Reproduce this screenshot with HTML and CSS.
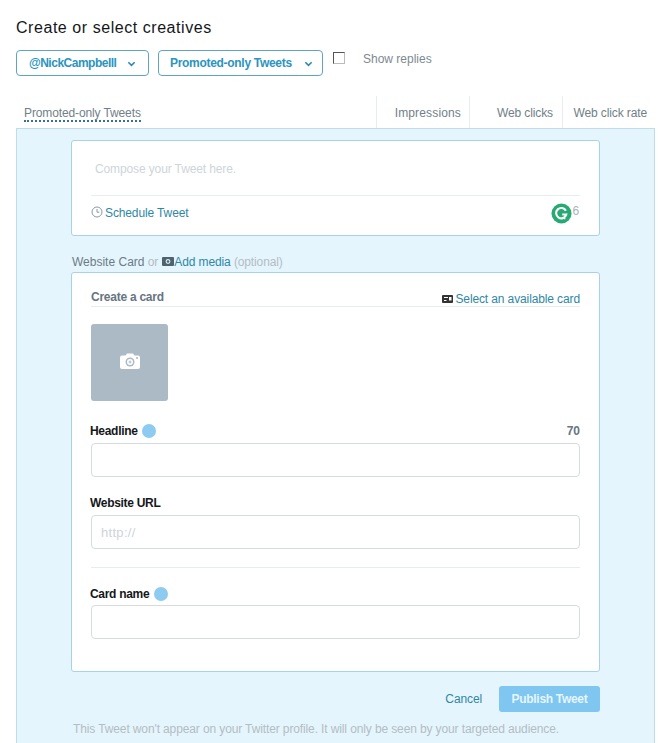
FILE: index.html
```html
<!DOCTYPE html>
<html lang="en">
<head>
<meta charset="utf-8">
<title>Create or select creatives</title>
<link rel="stylesheet" href="styles.css">
</head>
<body>
<div class="page">
  <h1 class="title">Create or select creatives</h1>
  <div class="filters">
    <button class="select select-account">@NickCampbelll<svg class="chev" viewBox="0 0 10 6"><path d="M1.500 1 5 4.500 8.500 1" fill="none" stroke="#2b8ab5" stroke-width="1.800"/></svg></button>
    <button class="select select-type">Promoted-only Tweets<svg class="chev" viewBox="0 0 10 6"><path d="M1.500 1 5 4.500 8.500 1" fill="none" stroke="#2b8ab5" stroke-width="1.800"/></svg></button>
    <span class="checkbox"></span>
    <span class="show-replies">Show replies</span>
  </div>
  <div class="table-head">
    <div class="col col-main"><span class="dotted">Promoted-only Tweets</span></div>
    <div class="col col-imp">Impressions</div>
    <div class="col col-clicks">Web clicks</div>
    <div class="col col-rate">Web click rate</div>
  </div>
  <div class="panel">
    <div class="column">
      <div class="box composer">
        <div class="placeholder compose-text">Compose your Tweet here.</div>
        <div class="composer-foot">
          <svg class="clock" viewBox="0 0 12 12"><circle cx="6" cy="6" r="5" fill="none" stroke="#8a9aa3" stroke-width="1"/><path d="M6 3v3.200h2.400" fill="none" stroke="#8a9aa3"/></svg>
          <a class="link">Schedule Tweet</a>
          <span class="grammarly"><svg viewBox="0 0 22 22"><circle cx="11" cy="11" r="10.500" fill="#26a972"/><path d="M15.600 8.200A5.400 5.400 0 1 0 16 12h-4.200" fill="none" stroke="#fff" stroke-width="2.200"/><path d="M12 15l3 1.500" stroke="#fff" stroke-width="1.600"/></svg></span>
          <span class="count">6</span>
        </div>
      </div>
      <div class="card-label">
        <span class="label-dark">Website Card</span> <span class="muted">or</span>
        <svg class="cam-small" viewBox="0 0 12 9"><rect width="12" height="9" rx="1" fill="#4b6470"/><circle cx="6" cy="4.500" r="2.400" fill="#dfe8ec"/><circle cx="6" cy="4.500" r="1.200" fill="#4b6470"/></svg><a class="link">Add media</a>
        <span class="muted">(optional)</span>
      </div>
      <div class="box card">
        <div class="card-head">
          <span class="card-title">Create a card</span>
          <span class="card-select">
            <svg class="card-icon" viewBox="0 0 11 8"><rect width="11" height="8" rx="1" fill="#333"/><path d="M2 2.500h4M2 5.500h2.500" stroke="#fff"/><rect x="7" y="2" width="2.500" height="3.500" fill="#fff"/></svg><a class="link">Select an available card</a>
          </span>
        </div>
        <div class="thumb">
          <svg class="cam" viewBox="0 0 20 16"><path d="M2 2.500h3.500L7 .5h6l1.500 2H18a2 2 0 0 1 2 2V14a2 2 0 0 1-2 2H2a2 2 0 0 1-2-2V4.500a2 2 0 0 1 2-2z" fill="#fff"/><circle cx="10" cy="9" r="4.500" fill="#abbac4"/><circle cx="10" cy="9" r="3" fill="#fff"/><path d="M10 7.500v3M8.500 9h3" stroke="#abbac4"/><circle cx="17" cy="5" r="1" fill="#abbac4"/></svg>
        </div>
        <div class="field-head field-headline">
          <span class="field-label">Headline</span><span class="help help-headline"></span>
          <span class="limit">70</span>
        </div>
        <div class="input"></div>
        <div class="field-head field-url">
          <span class="field-label">Website URL</span>
        </div>
        <div class="input placeholder url-text">http://</div>
        <hr class="rule">
        <div class="field-head field-name">
          <span class="field-label">Card name</span><span class="help"></span>
        </div>
        <div class="input input-last"></div>
      </div>
      <div class="actions">
        <a class="cancel">Cancel</a>
        <button class="publish">Publish Tweet</button>
      </div>
      <p class="note">This Tweet won't appear on your Twitter profile. It will only be seen by your targeted audience.</p>
    </div>
  </div>
</div>
</body>
</html>
```
FILE: styles.css
```css
* { box-sizing: border-box; }
html, body { margin: 0; height: 743px; overflow: hidden; background: #fff; }
body { font-family: "Liberation Sans", Arial, sans-serif; color: #707f88; font-size: 12px; letter-spacing: -0.12px; }
.page { padding: 18px 15px 0 16px; }
.title { margin: 0; font-size: 16px; line-height: 20px; font-weight: 400; color: #14171a; letter-spacing: 0.55px; }
.filters { display: flex; align-items: flex-start; margin-top: 12px; height: 26px; }
.select { height: 26px; padding: 0 0 1px 12px; display: flex; align-items: center; background: #fff; border: 1px solid #5fa4c1; border-radius: 4px; color: #2b94c0; font: 700 12px "Liberation Sans", Arial, sans-serif; letter-spacing: -0.3px; white-space: pre; }
.select-account { width: 133px; letter-spacing: -0.5px; }
.select-type { width: 165px; margin-left: 9px; padding-left: 11px; }
.chev { flex: none; width: 9px; height: 6px; margin-left: 11px; margin-top: 3px; }
.select-type .chev { margin-left: 12px; }
.checkbox { width: 12px; height: 12px; margin: 2px 0 0 10px; border: 1px solid #555; border-right-color: #bbb; border-bottom-color: #bbb; background: #fff; }
.show-replies { margin: 2px 0 0 18px; line-height: 14px; letter-spacing: 0; color: #7d8a92; }
.table-head { display: flex; height: 32px; margin-top: 20px; }
.col { display: flex; align-items: center; justify-content: flex-end; padding: 2px 0 0; border-left: 1px solid #e6ecf0; white-space: nowrap; }
.col-main { width: 360px; justify-content: flex-start; padding: 3px 0 0 8px; border-left: 0; }
.col-imp { width: 93px; padding-right: 8px; letter-spacing: 0.15px; }
.col-clicks { width: 93px; padding-right: 9px; }
.col-rate { width: 93px; padding-right: 8px; }
.dotted { border-bottom: 2px dotted #3a6f96; line-height: 14px; }
.panel { height: 640px; background: #e5f5fd; border: 1px solid #c2dce6; border-bottom: 0; padding: 11px 54px 0; }
.column { width: 529px; }
.box { background: #fff; border: 1px solid #a9d3e0; border-radius: 3px; }
.composer { height: 96px; padding: 0 19px; }
.placeholder { color: #cdd5da; }
.compose-text { height: 54px; padding: 21px 0 0 4px; line-height: 14px; }
.composer-foot { display: flex; align-items: center; position: relative; height: 34px; border-top: 1px solid #e6ecf0; }
.clock { width: 12px; height: 12px; margin-right: 2px; margin-top: -2px; }
.link { color: #2f87a6; }
.grammarly { position: absolute; left: 460px; top: 7px; width: 21px; height: 21px; }
.grammarly svg { display: block; width: 21px; height: 21px; }
.count { position: absolute; right: 1px; top: 8px; line-height: 14px; color: #aab4ba; }
.card-label { height: 36px; padding: 19px 0 0 1px; line-height: 14px; white-space: nowrap; }
.label-dark { color: #6c7c85; letter-spacing: 0; }
.muted { color: #b3bdc3; }
.cam-small { width: 12px; height: 9px; margin-left: 1px; }
.card { height: 400px; padding: 0 19px; }
.card-head { display: flex; justify-content: space-between; height: 34px; border-bottom: 1px solid #e6ecf0; }
.card-title { font-weight: 700; color: #66757f; line-height: 14px; padding-top: 17px; letter-spacing: -0.25px; }
.card-select { line-height: 14px; padding-top: 19px; }
.card-icon { width: 11px; height: 8px; margin-right: 2px; }
.thumb { width: 77px; height: 77px; margin-top: 17px; padding-bottom: 3px; display: flex; align-items: center; justify-content: center; background: #abbac4; border-radius: 3px; }
.cam { width: 20px; height: 16px; }
.field-head { display: flex; align-items: center; height: 14px; margin-left: -1px; }
.field-headline { margin-top: 23px; }
.field-url { margin-top: 19px; }
.field-name { margin-top: 19px; }
.field-label { font-weight: 700; color: #14171a; letter-spacing: -0.3px; }
.help { width: 14px; height: 14px; margin-left: 5px; border-radius: 50%; background: #8ecbf0; }
.help-headline { margin-left: 4px; }
.limit { margin-left: auto; font-weight: 700; color: #66757f; letter-spacing: 0; }
.input { height: 34px; margin-top: 5px; background: #fff; border: 1px solid #d5dce0; border-radius: 4px; }
.input-last { margin-top: 4px; }
.url-text { padding-left: 9px; line-height: 33px; font-size: 13px; letter-spacing: 0.3px; }
.rule { height: 1px; margin: 18px 0 0; border: 0; background: #e6ecf0; }
.actions { display: flex; justify-content: flex-end; align-items: center; height: 26px; margin-top: 14px; }
.cancel { color: #2f87a6; margin-right: 17px; }
.publish { width: 101px; height: 26px; padding: 0; background: #7fc6f0; border: 0; border-radius: 3px; color: #e5f5fd; font: 700 12px "Liberation Sans", Arial, sans-serif; letter-spacing: -0.3px; }
.note { margin: 10px 0 0 2px; line-height: 14px; color: #b3bdc3; white-space: nowrap; }
```
